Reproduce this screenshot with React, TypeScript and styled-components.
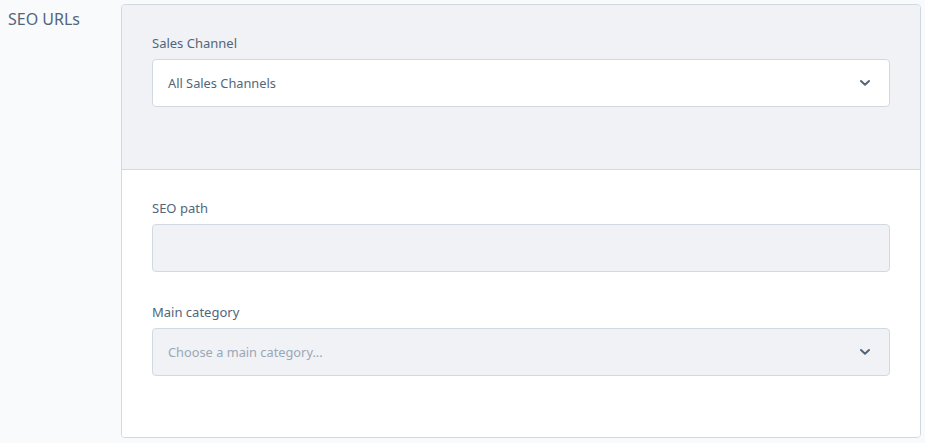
import React from "react";
import styled, { createGlobalStyle } from "styled-components";

const Global = createGlobalStyle`
  html, body { margin: 0; padding: 0; background: #f9fafb; }
  body { font-family: "Source Sans Pro", "Noto Sans", "Open Sans", sans-serif; color: #52667a; }
  * { box-sizing: border-box; }
`;

const Page = styled.div`
  display: grid;
  grid-template-columns: 113px 1fr;
  padding: 4px 4px 5px 8px;
  height: 443px;
`;

const Title = styled.h2`
  margin: 0;
  padding-top: 5px;
  font-size: 16px;
  font-weight: 400;
  line-height: 20px;
  color: #52667a;
`;

const Card = styled.div`
  border: 1px solid #d1d9e0;
  border-radius: 4px;
  background: #fff;
  overflow: hidden;
  display: flex;
  flex-direction: column;
`;

const Section = styled.div<{ $muted?: boolean }>`
  padding: 30px 30px 62px;
  background: ${(p) => (p.$muted ? "#f0f2f5" : "#fff")};
  border-bottom: ${(p) => (p.$muted ? "1px solid #d1d9e0" : "none")};
  display: flex;
  flex-direction: column;
  gap: 32px;
`;

const Field = styled.div`
  display: flex;
  flex-direction: column;
`;

const Label = styled.label`
  font-size: 13px;
  line-height: 16px;
  margin-bottom: 8px;
  color: #52667a;
`;

const Box = styled.div<{ $disabled?: boolean }>`
  height: 48px;
  border: 1px solid #d1d9e0;
  border-radius: 4px;
  background: ${(p) => (p.$disabled ? "#f0f2f5" : "#fff")};
  display: flex;
  align-items: center;
  padding: 0 18px 0 15px;
  font-size: 12.8px;
`;

const Value = styled.span<{ $placeholder?: boolean }>`
  flex: 1;
  color: ${(p) => (p.$placeholder ? "#9aa8b5" : "#52667a")};
`;

const Chevron = () => (
  <svg width="12" height="8" viewBox="0 0 12 8">
    <path d="M2 2 L6 5.8 L10 2" fill="none" stroke="#52667a" strokeWidth="2" strokeLinecap="round" strokeLinejoin="round" />
  </svg>
);

export default function App() {
  return (
    <>
      <Global />
      <Page>
        <Title>SEO URLs</Title>
        <Card>
          <Section $muted>
            <Field>
              <Label>Sales Channel</Label>
              <Box>
                <Value>All Sales Channels</Value>
                <Chevron />
              </Box>
            </Field>
          </Section>
          <Section>
            <Field>
              <Label>SEO path</Label>
              <Box $disabled />
            </Field>
            <Field>
              <Label>Main category</Label>
              <Box $disabled>
                <Value $placeholder>Choose a main category...</Value>
                <Chevron />
              </Box>
            </Field>
          </Section>
        </Card>
      </Page>
    </>
  );
}
